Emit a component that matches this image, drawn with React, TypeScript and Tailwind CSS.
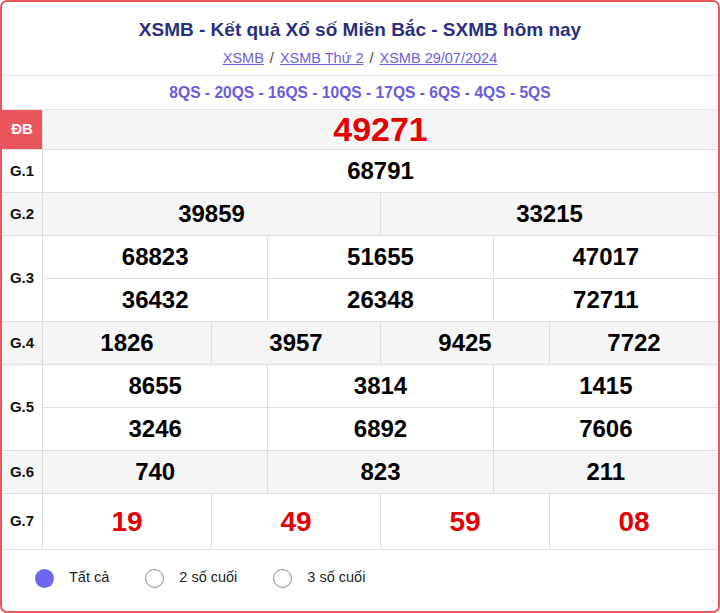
import React from "react";

// Bảng kết quả XSMB — header, prize rows, footer filter

const rows: { label: string; lines: string[][]; bg: boolean }[] = [
  { label: "G.1", lines: [["68791"]], bg: false },
  { label: "G.2", lines: [["39859", "33215"]], bg: true },
  { label: "G.3", lines: [["68823", "51655", "47017"], ["36432", "26348", "72711"]], bg: false },
  { label: "G.4", lines: [["1826", "3957", "9425", "7722"]], bg: true },
  { label: "G.5", lines: [["8655", "3814", "1415"], ["3246", "6892", "7606"]], bg: false },
  { label: "G.6", lines: [["740", "823", "211"]], bg: true },
];

function PrizeLine({ nums, red, tall }: { nums: string[]; red?: boolean; tall?: boolean }) {
  return (
    <div className={`flex ${tall ? "h-[55px]" : "h-[42px]"}`}>
      {nums.map((n, i) => (
        <div
          key={i}
          className={`flex flex-1 items-center justify-center font-bold ${
            i > 0 ? "border-l border-[#dedede]" : ""
          } ${red ? "text-[28px] text-[#e30000]" : "text-[24px] text-black"}`}
        >
          {n}
        </div>
      ))}
    </div>
  );
}

function Radio({ on, label }: { on?: boolean; label: string }) {
  return (
    <div className="flex items-center gap-[15px]">
      <span
        className={`h-[19px] w-[19px] rounded-full ${
          on ? "bg-[#6e66f0]" : "border border-[#8a8a8a] bg-white"
        }`}
      />
      <span className="text-[14.5px] text-[#222]">{label}</span>
    </div>
  );
}

export default function App() {
  return (
    <div
      className="flex h-[613px] w-[720px] flex-col overflow-hidden rounded-[7px] border-2 border-[#e9585d] bg-white"
      style={{ fontFamily: '"Liberation Sans", Arial, sans-serif' }}
    >
      {/* ─── Tiêu đề ─── */}
      <div className="flex h-[74px] flex-col items-center border-b border-[#e2e2e2] pt-[16px]">
        <h1 className="text-[19px] leading-[24px] font-bold text-[#2b2f7d]">
          XSMB - Kết quả Xổ số Miền Bắc - SXMB hôm nay
        </h1>
        <div className="mt-[7px] flex items-center gap-[6px] text-[14.5px] leading-[18px] text-[#444]">
          <a className="text-[#6b61dd] underline">XSMB </a>
          <span>/</span>
          <a className="text-[#6b61dd] underline">XSMB Thứ 2 </a>
          <span>/</span>
          <a className="text-[#6b61dd] underline">XSMB 29/07/2024</a>
        </div>
      </div>

      {/* ─── Mã QS ─── */}
      <div className="flex h-[34px] items-center justify-center border-b border-[#e2e2e2] pt-[1px] text-[15.6px] font-bold text-[#6a5cdb]">
        8QS - 20QS - 16QS - 10QS - 17QS - 6QS - 4QS - 5QS
      </div>

      {/* ─── Bảng giải ─── */}
      <div className="flex h-[40px] border-b border-[#dedede] bg-[#f5f5f5]">
        <div className="flex w-[41px] items-center justify-center border-r border-[#dedede] bg-[#e9575c] text-[15px] font-bold text-white">
          ĐB
        </div>
        <div className="flex flex-1 items-center justify-center text-[34px] font-bold text-[#e30000]">49271</div>
      </div>

      {rows.map((r) => (
        <div key={r.label} className={`flex border-b border-[#dedede] ${r.bg ? "bg-[#f5f5f5]" : "bg-white"}`}>
          <div className="flex w-[41px] items-center justify-center border-r border-[#dedede] text-[15px] font-bold text-[#111]">
            {r.label}
          </div>
          <div className="flex flex-1 flex-col">
            {r.lines.map((line, i) => (
              <div key={i} className={i > 0 ? "border-t border-[#dedede]" : ""}>
                <PrizeLine nums={line} />
              </div>
            ))}
          </div>
        </div>
      ))}

      <div className="flex border-b border-[#dedede] bg-white">
        <div className="flex w-[41px] items-center justify-center border-r border-[#dedede] text-[15px] font-bold text-[#111]">
          G.7
        </div>
        <div className="flex-1">
          <PrizeLine nums={["19", "49", "59", "08"]} red tall />
        </div>
      </div>

      {/* ─── Lọc số ─── */}
      <div className="flex flex-1 items-center gap-[36px] pl-[33px] pb-[5px]">
        <Radio on label="Tất cả" />
        <Radio label="2 số cuối" />
        <Radio label="3 số cuối" />
      </div>
    </div>
  );
}
